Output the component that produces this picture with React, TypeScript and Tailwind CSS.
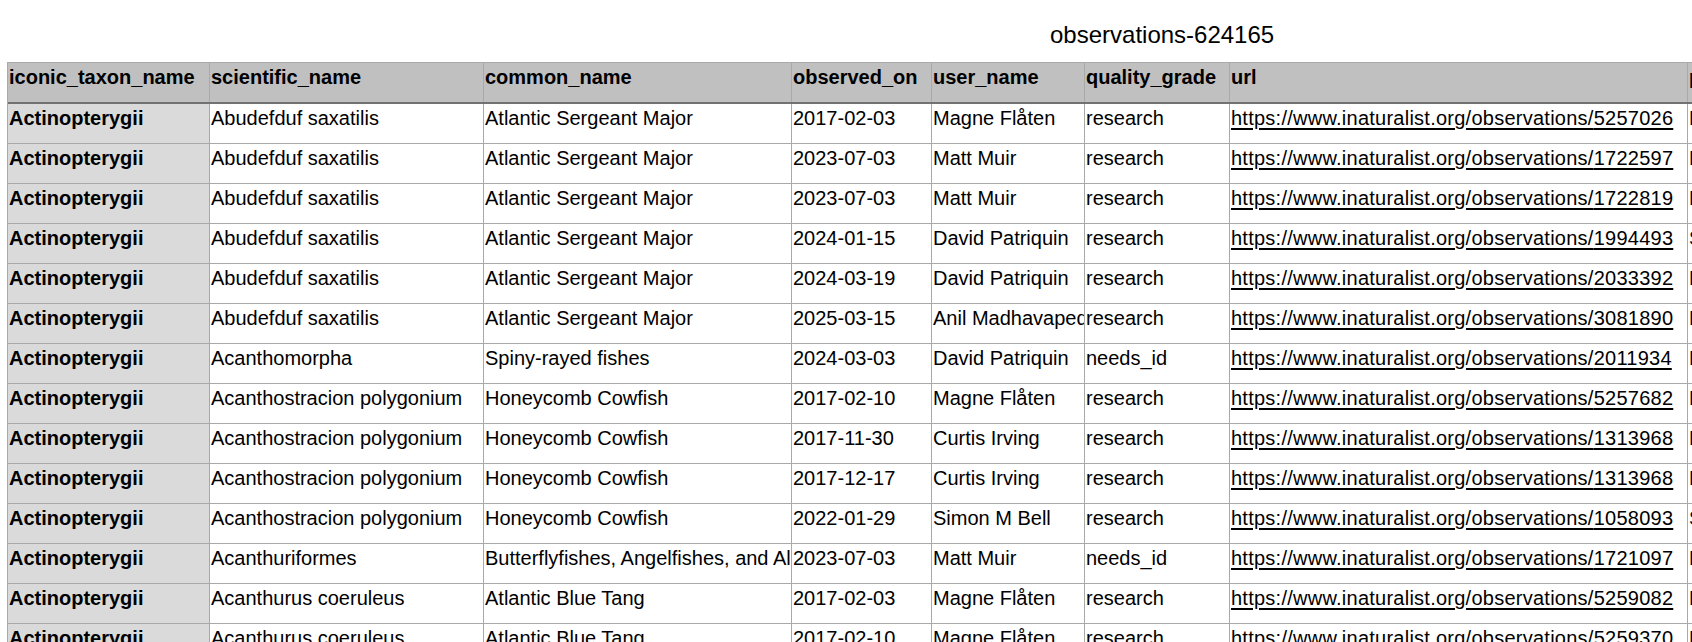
import React from "react";

type Row = {
  sci: string;
  common: string;
  date: string;
  user: string;
  grade: string;
  url: string;
  place: string;
};

const rows: Row[] = [
  { sci: "Abudefduf saxatilis", common: "Atlantic Sergeant Major", date: "2017-02-03", user: "Magne Flåten", grade: "research", url: "5257026", place: "Bermuda" },
  { sci: "Abudefduf saxatilis", common: "Atlantic Sergeant Major", date: "2023-07-03", user: "Matt Muir", grade: "research", url: "1722597", place: "Bermuda" },
  { sci: "Abudefduf saxatilis", common: "Atlantic Sergeant Major", date: "2023-07-03", user: "Matt Muir", grade: "research", url: "1722819", place: "Bermuda" },
  { sci: "Abudefduf saxatilis", common: "Atlantic Sergeant Major", date: "2024-01-15", user: "David Patriquin", grade: "research", url: "1994493", place: "Smith's Parish" },
  { sci: "Abudefduf saxatilis", common: "Atlantic Sergeant Major", date: "2024-03-19", user: "David Patriquin", grade: "research", url: "2033392", place: "Bermuda" },
  { sci: "Abudefduf saxatilis", common: "Atlantic Sergeant Major", date: "2025-03-15", user: "Anil Madhavapeddy", grade: "research", url: "3081890", place: "Bermuda" },
  { sci: "Acanthomorpha", common: "Spiny-rayed fishes", date: "2024-03-03", user: "David Patriquin", grade: "needs_id", url: "2011934", place: "Bermuda" },
  { sci: "Acanthostracion polygonium", common: "Honeycomb Cowfish", date: "2017-02-10", user: "Magne Flåten", grade: "research", url: "5257682", place: "Bermuda" },
  { sci: "Acanthostracion polygonium", common: "Honeycomb Cowfish", date: "2017-11-30", user: "Curtis Irving", grade: "research", url: "1313968", place: "Bermuda" },
  { sci: "Acanthostracion polygonium", common: "Honeycomb Cowfish", date: "2017-12-17", user: "Curtis Irving", grade: "research", url: "1313968", place: "Bermuda" },
  { sci: "Acanthostracion polygonium", common: "Honeycomb Cowfish", date: "2022-01-29", user: "Simon M Bell", grade: "research", url: "1058093", place: "Smith's Parish" },
  { sci: "Acanthuriformes", common: "Butterflyfishes, Angelfishes, and Allies", date: "2023-07-03", user: "Matt Muir", grade: "needs_id", url: "1721097", place: "Bermuda" },
  { sci: "Acanthurus coeruleus", common: "Atlantic Blue Tang", date: "2017-02-03", user: "Magne Flåten", grade: "research", url: "5259082", place: "Bermuda" },
  { sci: "Acanthurus coeruleus", common: "Atlantic Blue Tang", date: "2017-02-10", user: "Magne Flåten", grade: "research", url: "5259370", place: "Bermuda" },
];

const cell =
  "shrink-0 overflow-hidden whitespace-nowrap border-r border-[#a9a9a9] pl-[1px] pt-[3px] leading-[23px]";

export default function App() {
  return (
    <div
      className="w-[1692px] h-[642px] overflow-hidden bg-white text-black text-[20px]"
      style={{ fontFamily: '"Liberation Sans", Arial, Helvetica, sans-serif' }}
    >
      <div className="h-[62px] pt-[21px] pl-[1050px] text-[24px] leading-[28px] whitespace-nowrap">
        observations-624165
      </div>
      <div className="ml-[7px] w-[2000px] border-l border-[#a9a9a9]">
        {/* header */}
        <div className="flex h-[42px] border-t border-[#a9a9a9] border-b-2 border-b-[#727272] bg-[#c0c0c0] font-bold">
          <div className={`${cell} w-[202px]`}>iconic_taxon_name</div>
          <div className={`${cell} w-[274px]`}>scientific_name</div>
          <div className={`${cell} w-[308px]`}>common_name</div>
          <div className={`${cell} w-[140px]`}>observed_on</div>
          <div className={`${cell} w-[153px]`}>user_name</div>
          <div className={`${cell} w-[145px]`}>quality_grade</div>
          <div className={`${cell} w-[458px]`}>url</div>
          <div className={`${cell} w-[300px]`}>place_guess</div>
        </div>
        {rows.map((r, i) => (
          <div key={i} className="flex h-[40px] border-b border-[#a9a9a9]">
            <div className={`${cell} w-[202px] bg-[#dadada] font-bold`}>Actinopterygii</div>
            <div className={`${cell} w-[274px]`}>{r.sci}</div>
            <div className={`${cell} w-[308px]`}>{r.common}</div>
            <div className={`${cell} w-[140px]`}>{r.date}</div>
            <div className={`${cell} w-[153px]`}>{r.user}</div>
            <div className={`${cell} w-[145px]`}>{r.grade}</div>
            <div className={`${cell} w-[458px]`}>
              <span className="underline decoration-[1.5px] underline-offset-[3px] tracking-[0.25px]">
                https://www.inaturalist.org/observations/{r.url}
              </span>
            </div>
            <div className={`${cell} w-[300px]`}>{r.place}</div>
          </div>
        ))}
      </div>
    </div>
  );
}
